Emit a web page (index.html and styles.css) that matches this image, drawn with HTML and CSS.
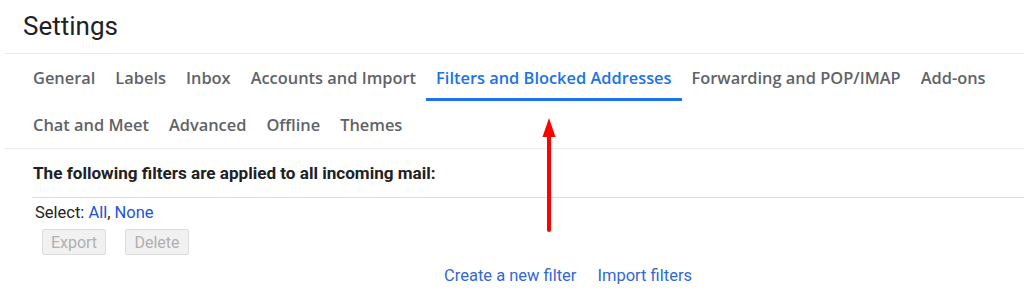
FILE: index.html
```html
<!DOCTYPE html>
<html>
<head>
<meta charset="utf-8">
<link rel="stylesheet" href="styles.css">
</head>
<body>
<div class="page">
  <div class="header"><h1 class="title">Settings</h1></div>
  <nav class="tabs">
    <div class="tab">General</div>
    <div class="tab">Labels</div>
    <div class="tab">Inbox</div>
    <div class="tab">Accounts and Import</div>
    <div class="tab active">Filters and Blocked Addresses</div>
    <div class="tab">Forwarding and POP/IMAP</div>
    <div class="tab">Add-ons</div>
    <div class="tab">Chat and Meet</div>
    <div class="tab">Advanced</div>
    <div class="tab">Offline</div>
    <div class="tab">Themes</div>
  </nav>
  <div class="content">
    <div class="heading">The following filters are applied to all incoming mail:</div>
    <div class="list">
      <div class="select">Select: <span class="link">All</span>, <span class="link">None</span></div>
      <div class="buttons">
        <button class="btn" disabled>Export</button>
        <button class="btn" disabled>Delete</button>
      </div>
      <div class="actions">
        <span class="link2">Create a new filter</span>
        <span class="link2">Import filters</span>
      </div>
    </div>
  </div>
  <svg class="arrow" width="20" height="120" viewBox="0 0 20 120">
    <line x1="10" y1="16" x2="10" y2="112" stroke="#f00" stroke-width="4" stroke-linecap="round"/>
    <polygon points="10,0 3.5,19 16.5,19" fill="#f00"/>
  </svg>
</div>
</body>
</html>
```

FILE: styles.css
```css
html, body {
  margin: 0;
  padding: 0;
  background: #fff;
}
.page {
  position: relative;
  width: 1024px;
  height: 305px;
  overflow: hidden;
  font-family: Roboto, "Liberation Sans", Arial, sans-serif;
}
.header {
  height: 53px;
  border-bottom: 1px solid #eaebed;
  margin-left: 4px;
  padding-left: 19px;
}
.title {
  margin: 0;
  font-family: Roboto, sans-serif;
  font-weight: 400;
  font-size: 26px;
  line-height: 52px;
  color: #202124;
}
.tabs {
  display: flex;
  flex-wrap: wrap;
  padding-left: 19px;
  margin-left: 4px;
  border-bottom: 1px solid #eaebed;
}
.tab {
  padding: 0 10px;
  height: 47px;
  line-height: 48px;
  font-family: "Open Sans", Roboto, sans-serif;
  font-size: 16.4px;
  font-weight: 600;
  color: #5f6368;
  white-space: nowrap;
  box-sizing: border-box;
}
.tab.active {
  color: #1a73e8;
  border-bottom: 3px solid #1a73e8;
}
.content {
  padding-left: 32px;
}
.heading {
  height: 48px;
  line-height: 48px;
  padding-left: 1px;
  font-size: 17.1px;
  font-weight: 700;
  color: #202124;
  border-bottom: 1px solid #dadce0;
}
.list {
  padding-left: 3px;
}
.select {
  font-size: 16.5px;
  color: #222;
  margin-top: 5px;
  line-height: 20px;
}
.link {
  color: #1a55d6;
}
.buttons {
  display: flex;
  gap: 19px;
  margin-top: 6px;
  padding-left: 7px;
}
.btn {
  font-family: Roboto, "Liberation Sans", Arial, sans-serif;
  width: 64px;
  height: 26px;
  font-size: 16px;
  color: #b0b0b0;
  background: #f1f1f1;
  border: 1px solid #dcdcdc;
  border-radius: 2px;
  padding: 0;
}
.actions {
  display: flex;
  gap: 21px;
  margin-top: 11px;
  padding-left: 409px;
}
.link2 {
  font-size: 16.5px;
  color: #3367d6;
}
.arrow {
  position: absolute;
  left: 539px;
  top: 118px;
}
```
